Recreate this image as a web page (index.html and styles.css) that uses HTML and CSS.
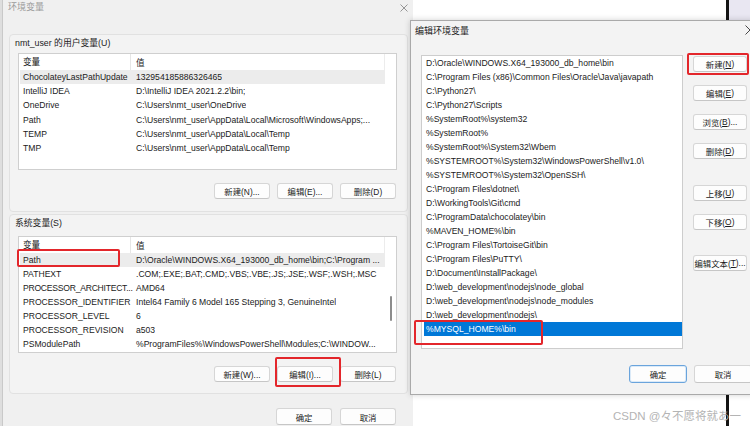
FILE: index.html
```html
<!DOCTYPE html>
<html lang="zh-CN">
<head>
<meta charset="utf-8">
<title>环境变量</title>
<link rel="stylesheet" href="styles.css">
</head>
<body>
<div class="desk">
  <div class="edge"></div>
  <div class="bar-dark"></div>
  <div class="bar-lav"></div>

  <section class="win env">
    <header class="tb">
      <span class="tt">环境变量</span>
      <svg class="xclose" width="8" height="8" viewBox="0 0 8 8"><path d="M0.5 0.5L7.5 7.5M7.5 0.5L0.5 7.5" stroke="#8a8a8a" stroke-width="0.9" fill="none"/></svg>
    </header>

    <div class="group g1">
      <div class="glabel">nmt_user 的用户变量(U)</div>
      <div class="list">
        <div class="lh"><span class="c1">变量</span><span class="c2">值</span></div>
        <div class="row hl"><span class="c1">ChocolateyLastPathUpdate</span><span class="c2">132954185886326465</span></div>
        <div class="row"><span class="c1">IntelliJ IDEA</span><span class="c2">D:\IntelliJ IDEA 2021.2.2\bin;</span></div>
        <div class="row"><span class="c1">OneDrive</span><span class="c2">C:\Users\nmt_user\OneDrive</span></div>
        <div class="row"><span class="c1">Path</span><span class="c2">C:\Users\nmt_user\AppData\Local\Microsoft\WindowsApps;...</span></div>
        <div class="row"><span class="c1">TEMP</span><span class="c2">C:\Users\nmt_user\AppData\Local\Temp</span></div>
        <div class="row"><span class="c1">TMP</span><span class="c2">C:\Users\nmt_user\AppData\Local\Temp</span></div>
      </div>
      <div class="btns">
        <button class="btn">新建(N)...</button>
        <button class="btn">编辑(E)...</button>
        <button class="btn">删除(D)</button>
      </div>
    </div>

    <div class="group g2">
      <div class="glabel">系统变量(S)</div>
      <div class="list">
        <div class="lh"><span class="c1">变量</span><span class="c2">值</span></div>
        <div class="row hl"><span class="c1">Path</span><span class="c2">D:\Oracle\WINDOWS.X64_193000_db_home\bin;C:\Program ...</span></div>
        <div class="row"><span class="c1">PATHEXT</span><span class="c2">.COM;.EXE;.BAT;.CMD;.VBS;.VBE;.JS;.JSE;.WSF;.WSH;.MSC</span></div>
        <div class="row"><span class="c1 tight">PROCESSOR_ARCHITECT...</span><span class="c2">AMD64</span></div>
        <div class="row"><span class="c1">PROCESSOR_IDENTIFIER</span><span class="c2">Intel64 Family 6 Model 165 Stepping 3, GenuineIntel</span></div>
        <div class="row"><span class="c1">PROCESSOR_LEVEL</span><span class="c2">6</span></div>
        <div class="row"><span class="c1">PROCESSOR_REVISION</span><span class="c2">a503</span></div>
        <div class="row"><span class="c1">PSModulePath</span><span class="c2">%ProgramFiles%\WindowsPowerShell\Modules;C:\WINDOW...</span></div>
        <div class="vscroll"></div>
      </div>
      <div class="btns">
        <button class="btn">新建(W)...</button>
        <button class="btn">编辑(I)...</button>
        <button class="btn">删除(L)</button>
      </div>
    </div>

    <div class="okrow">
      <button class="btn">确定</button>
      <button class="btn">取消</button>
    </div>
  </section>

  <section class="win edit">
    <header class="tb2">
      <span class="tt2">编辑环境变量</span>
      <svg class="xclose2" width="10" height="10" viewBox="0 0 10 10"><path d="M0.5 0.5L9.5 9.5M9.5 0.5L0.5 9.5" stroke="#333" stroke-width="0.9" fill="none"/></svg>
    </header>
    <div class="ebody">
      <div class="plist">
        <div class="prow">D:\Oracle\WINDOWS.X64_193000_db_home\bin</div>
        <div class="prow">C:\Program Files (x86)\Common Files\Oracle\Java\javapath</div>
        <div class="prow">C:\Python27\</div>
        <div class="prow">C:\Python27\Scripts</div>
        <div class="prow">%SystemRoot%\system32</div>
        <div class="prow">%SystemRoot%</div>
        <div class="prow">%SystemRoot%\System32\Wbem</div>
        <div class="prow">%SYSTEMROOT%\System32\WindowsPowerShell\v1.0\</div>
        <div class="prow">%SYSTEMROOT%\System32\OpenSSH\</div>
        <div class="prow">C:\Program Files\dotnet\</div>
        <div class="prow">D:\WorkingTools\Git\cmd</div>
        <div class="prow">C:\ProgramData\chocolatey\bin</div>
        <div class="prow">%MAVEN_HOME%\bin</div>
        <div class="prow">C:\Program Files\TortoiseGit\bin</div>
        <div class="prow">C:\Program Files\PuTTY\</div>
        <div class="prow">D:\Document\InstallPackage\</div>
        <div class="prow">D:\web_development\nodejs\node_global</div>
        <div class="prow">D:\web_development\nodejs\node_modules</div>
        <div class="prow">D:\web_development\nodejs\</div>
        <div class="prow sel">%MYSQL_HOME%\bin</div>
      </div>
      <div class="ecol">
        <button class="btn eb">新建(<u>N</u>)</button>
        <button class="btn eb">编辑(<u>E</u>)</button>
        <button class="btn eb">浏览(<u>B</u>)...</button>
        <button class="btn eb">删除(<u>D</u>)</button>
        <button class="btn eb gap1">上移(<u>U</u>)</button>
        <button class="btn eb">下移(<u>O</u>)</button>
        <button class="btn eb gap2">编辑文本(<u>T</u>)...</button>
      </div>
    </div>
    <div class="eok">
      <button class="btn ok primary">确定</button>
      <button class="btn ok">取消</button>
    </div>
  </section>

  <div class="mark m-path"></div>
  <div class="mark m-edit"></div>
  <div class="mark m-new"></div>
  <div class="mark m-mysql"></div>

  <div class="wm">CSDN @々不愿将就あ一</div>
</div>
</body>
</html>
```

FILE: styles.css
```css
* { box-sizing: border-box; }
html, body { margin: 0; padding: 0; }
body {
  width: 750px;
  height: 426px;
  overflow: hidden;
  background: #ffffff;
  font-family: "Liberation Sans", "Noto Sans CJK SC", sans-serif;
  font-size: 8.6px;
  color: #1b1b1b;
}
.desk { position: relative; width: 750px; height: 426px; }

.edge {
  position: absolute; left: 0; top: 0; width: 3px; height: 426px;
  background: #dedede; border-right: 1px solid #c9c9c9;
}
.bar-dark { position: absolute; left: 726px; top: 0; width: 3px; height: 426px; background: #141414; }
.bar-lav { position: absolute; left: 729px; top: 0; width: 21px; height: 20px; background: #e9e7f2; }

.win { position: absolute; }

/* left dialog */
.env {
  left: 3px; top: 0; width: 410px; height: 426px;
  background: #f0f0f0;
  display: flex; flex-direction: column;
}
.tb { height: 34px; position: relative; display: flex; align-items: flex-start; padding: 2px 5px 0; }
.tt { font-size: 9px; line-height: 11px; color: #9b9b9b; }
.xclose { position: absolute; left: 397px; top: 4px; }

.group {
  margin-left: 6px; width: 399px;
  border: 1px solid #e1e1e1; border-radius: 4px;
  background: #f3f3f3;
  padding: 3px 10px 11px 8px;
  display: flex; flex-direction: column;
}
.g1 { padding-bottom: 12px; }
.g2 { margin-top: 2px; }
.glabel { font-size: 8.8px; line-height: 11px; color: #1b1b1b; margin-left: -3px; }
.g1 .list { margin-top: 4px; }
.g2 .list { margin-top: 7px; }

.list {
  position: relative;
  height: 117px;
  background: #fff;
  border: 1px solid #cfcfcf;
  padding: 0 11px 0 1px;
}
.lh { height: 16px; display: flex; align-items: center; background: #fff; border-right: 1px solid #ececec; }
.row { height: 14.2px; display: flex; align-items: center; white-space: nowrap; }
.row.hl { background: #ececec; }
.g2 .row { height: 14px; }
.c1 { width: 111px; padding-left: 3px; flex: none; white-space: nowrap; }
.c1.tight { letter-spacing: -0.25px; }
.lh .c1 { border-right: 1px solid #e6e6e6; height: 16px; line-height: 16px; }
.c2 { padding-left: 5px; overflow: hidden; }
.vscroll { position: absolute; left: 371px; top: 59px; width: 1.5px; height: 25px; background: #8c8c8c; border-radius: 1px; }

.btns { display: flex; justify-content: flex-end; gap: 7px; margin-top: 13px; padding-right: 1px; }

.btn {
  font: inherit; font-size: 8.4px; color: #1b1b1b;
  width: 56px; height: 16px; padding: 0; margin: 0;
  background: #fdfdfd;
  border: 1px solid #d6d6d6; border-bottom-color: #c6c6c6;
  border-radius: 3px;
  display: flex; align-items: center; justify-content: center;
  white-space: nowrap;
}
.btn u { text-underline-offset: 1px; }

.okrow { display: flex; justify-content: flex-end; gap: 8px; margin-top: 14px; padding-right: 17px; }
.okrow .btn { height: 17px; }

/* right dialog */
.edit {
  left: 410px; top: 20px; width: 345px; height: 375px;
  background: #f3f3f3;
  border: 1px solid #a9a9a9;
  box-shadow: 0 0 6px rgba(0,0,0,0.18);
  display: flex; flex-direction: column;
}
.tb2 { height: 19px; position: relative; display: flex; align-items: center; padding-left: 4px; }
.tt2 { font-size: 9px; color: #1b1b1b; }
.xclose2 { position: absolute; left: 334px; top: 4px; }

.ebody { display: flex; margin-top: 15px; padding-left: 10px; }
.plist {
  width: 262px; height: 294px;
  background: #fff; border: 1px solid #cdcdcd;
  padding: 0 0 0 1px;
}
.prow { height: 14px; line-height: 14px; padding-left: 3px; white-space: nowrap; }
.prow.sel { background: #0078d7; color: #fff; margin-left: 1px; padding-left: 2px; margin-right: 0; }

.ecol { display: flex; flex-direction: column; margin-left: 10px; padding-top: 1px; gap: 13px; }
.eb { width: 54px; }
.eb.gap1 { margin-top: 13px; }
.eb.gap2 { margin-top: 12px; }

.eok { display: flex; gap: 7px; margin-top: 16px; padding-left: 218px; }
.ok { width: 58px; height: 18px; }
.ok.primary { border: 1px solid #6aa4dc; box-shadow: inset 0 0 0 1px #dbeaf8; }

/* annotations */
.mark { position: absolute; border: 2px solid #e3262b; border-radius: 2px; }
.m-path { left: 17px; top: 249px; width: 103px; height: 18px; }
.m-edit { left: 275px; top: 357px; width: 66px; height: 30px; }
.m-new { left: 687px; top: 53px; width: 62px; height: 22px; }
.m-mysql { left: 414px; top: 320px; width: 129px; height: 25px; }

.wm {
  position: absolute; left: 613px; top: 408px;
  font-size: 11.5px; line-height: 16px; color: #b4b4b4;
  white-space: nowrap;
}
```
